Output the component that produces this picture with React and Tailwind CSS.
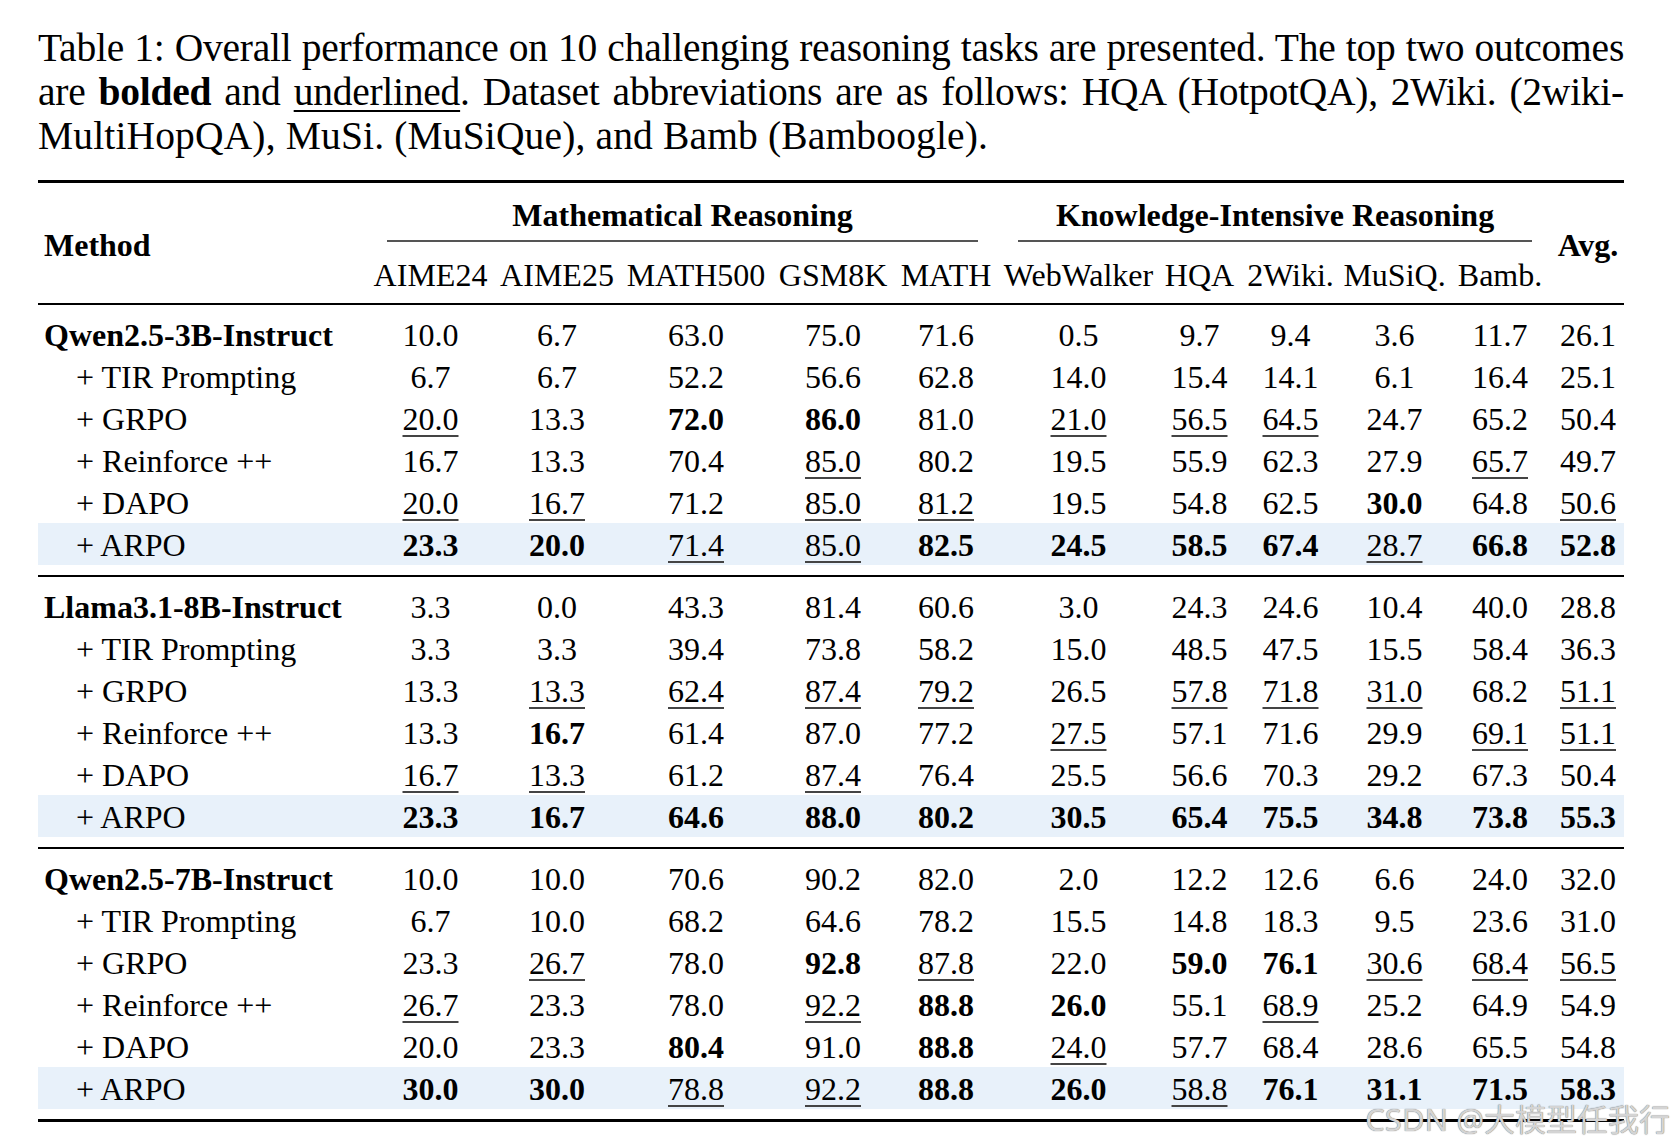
import React from "react";

// column widths of the table, in px
const cols =
  "grid grid-cols-[329px_127px_126px_152px_122px_104px_161px_81px_101px_107px_104px_72px]";

const subHeaders = [
  "AIME24",
  "AIME25",
  "MATH500",
  "GSM8K",
  "MATH",
  "WebWalker",
  "HQA",
  "2Wiki.",
  "MuSiQ.",
  "Bamb.",
];

// "b" = best (bold), "u" = second best (underlined)
const groups = [
  {
    model: "Qwen2.5-3B-Instruct",
    rows: [
      ["10.0", "6.7", "63.0", "75.0", "71.6", "0.5", "9.7", "9.4", "3.6", "11.7", "26.1"],
      ["6.7", "6.7", "52.2", "56.6", "62.8", "14.0", "15.4", "14.1", "6.1", "16.4", "25.1"],
      ["u20.0", "13.3", "b72.0", "b86.0", "81.0", "u21.0", "u56.5", "u64.5", "24.7", "65.2", "50.4"],
      ["16.7", "13.3", "70.4", "u85.0", "80.2", "19.5", "55.9", "62.3", "27.9", "u65.7", "49.7"],
      ["u20.0", "u16.7", "71.2", "u85.0", "u81.2", "19.5", "54.8", "62.5", "b30.0", "64.8", "u50.6"],
      ["b23.3", "b20.0", "u71.4", "u85.0", "b82.5", "b24.5", "b58.5", "b67.4", "u28.7", "b66.8", "b52.8"],
    ],
  },
  {
    model: "Llama3.1-8B-Instruct",
    rows: [
      ["3.3", "0.0", "43.3", "81.4", "60.6", "3.0", "24.3", "24.6", "10.4", "40.0", "28.8"],
      ["3.3", "3.3", "39.4", "73.8", "58.2", "15.0", "48.5", "47.5", "15.5", "58.4", "36.3"],
      ["13.3", "u13.3", "u62.4", "u87.4", "u79.2", "26.5", "u57.8", "u71.8", "u31.0", "68.2", "u51.1"],
      ["13.3", "b16.7", "61.4", "87.0", "77.2", "u27.5", "57.1", "71.6", "29.9", "u69.1", "u51.1"],
      ["u16.7", "u13.3", "61.2", "u87.4", "76.4", "25.5", "56.6", "70.3", "29.2", "67.3", "50.4"],
      ["b23.3", "b16.7", "b64.6", "b88.0", "b80.2", "b30.5", "b65.4", "b75.5", "b34.8", "b73.8", "b55.3"],
    ],
  },
  {
    model: "Qwen2.5-7B-Instruct",
    rows: [
      ["10.0", "10.0", "70.6", "90.2", "82.0", "2.0", "12.2", "12.6", "6.6", "24.0", "32.0"],
      ["6.7", "10.0", "68.2", "64.6", "78.2", "15.5", "14.8", "18.3", "9.5", "23.6", "31.0"],
      ["23.3", "u26.7", "78.0", "b92.8", "u87.8", "22.0", "b59.0", "b76.1", "u30.6", "u68.4", "u56.5"],
      ["u26.7", "23.3", "78.0", "u92.2", "b88.8", "b26.0", "55.1", "u68.9", "25.2", "64.9", "54.9"],
      ["20.0", "23.3", "b80.4", "91.0", "b88.8", "u24.0", "57.7", "68.4", "28.6", "65.5", "54.8"],
      ["b30.0", "b30.0", "u78.8", "u92.2", "b88.8", "b26.0", "u58.8", "b76.1", "b31.1", "b71.5", "b58.3"],
    ],
  },
];

const methods = ["+ TIR Prompting", "+ GRPO", "+ Reinforce ++", "+ DAPO", "+ ARPO"];

const Cell = ({ v }) => {
  if (v.startsWith("b")) return <span className="text-center font-bold">{v.slice(1)}</span>;
  if (v.startsWith("u"))
    return (
      <span className="text-center">
        <span className="underline decoration-[#444] decoration-2 underline-offset-[5px]">{v.slice(1)}</span>
      </span>
    );
  return <span className="text-center">{v}</span>;
};

const Group = ({ group }) => (
  <div className="pt-2 pb-2.5">
    {group.rows.map((row, i) => (
      <div
        key={i}
        className={`${cols} h-[42px] items-start leading-[45px] ${i === 5 ? "bg-[#e8f1fa]" : ""}`}
      >
        {i === 0 ? (
          <span className="pl-[6px] font-bold">{group.model}</span>
        ) : (
          <span className="pl-[38px]">{methods[i - 1]}</span>
        )}
        {row.map((v, j) => (
          <Cell key={j} v={v} />
        ))}
      </div>
    ))}
  </div>
);

export default function App() {
  return (
    <div className="relative min-h-screen w-[1673px] h-[1146px] bg-white text-black font-['Liberation_Serif','Times_New_Roman',serif]">
      {/* Caption */}
      <div className="pl-[38px] pt-[26px] pb-[22px] w-[1624px] text-[39.5px] leading-[44px] tracking-[-0.25px]">
        <p className="text-justify [text-align-last:justify]">
          Table 1: Overall performance on 10 challenging reasoning tasks are presented. The top two outcomes
        </p>
        <p className="text-justify [text-align-last:justify]">
          are <b>bolded</b> and <span className="underline decoration-2 underline-offset-[5px]">underlined</span>. Dataset abbreviations are as follows: HQA (HotpotQA), 2Wiki. (2wiki-
        </p>
        <p className="tracking-[0.15px]">MultiHopQA), MuSi. (MuSiQue), and Bamb (Bamboogle).</p>
      </div>

      {/* Table */}
      <div className="ml-[38px] w-[1586px] text-[32px]">
        <div className="h-[3px] bg-black" />
        <div className={`${cols} grid-rows-[59px_61px]`}>
          <div className="row-span-2 flex items-center pl-[6px] pt-[4px] font-bold">Method</div>
          <div className="col-span-5 mx-5 border-b-2 border-[#555] pt-[11px] text-center font-bold leading-[42px]">
            Mathematical Reasoning
          </div>
          <div className="col-span-5 mx-5 border-b-2 border-[#555] pt-[11px] text-center font-bold leading-[42px]">
            Knowledge-Intensive Reasoning
          </div>
          <div className="row-span-2 flex items-center justify-center pt-[4px] font-bold">Avg.</div>
          {subHeaders.map((h) => (
            <div key={h} className="pt-[12px] text-center leading-[42px]">
              {h}
            </div>
          ))}
        </div>
        <div className="h-[2px] bg-black" />
        <Group group={groups[0]} />
        <div className="h-[2px] bg-black" />
        <Group group={groups[1]} />
        <div className="h-[2px] bg-black" />
        <Group group={groups[2]} />
        <div className="h-[3px] bg-black" />
      </div>

      {/* watermark */}
      <div className="absolute right-[3px] top-[1103px] font-['Noto_Sans','Noto_Sans_CJK_SC',sans-serif] text-[31px] leading-[32px] text-[#d4d4d4] [text-shadow:0_0_1px_#555]">
        CSDN @大模型任我行
      </div>
    </div>
  );
}
